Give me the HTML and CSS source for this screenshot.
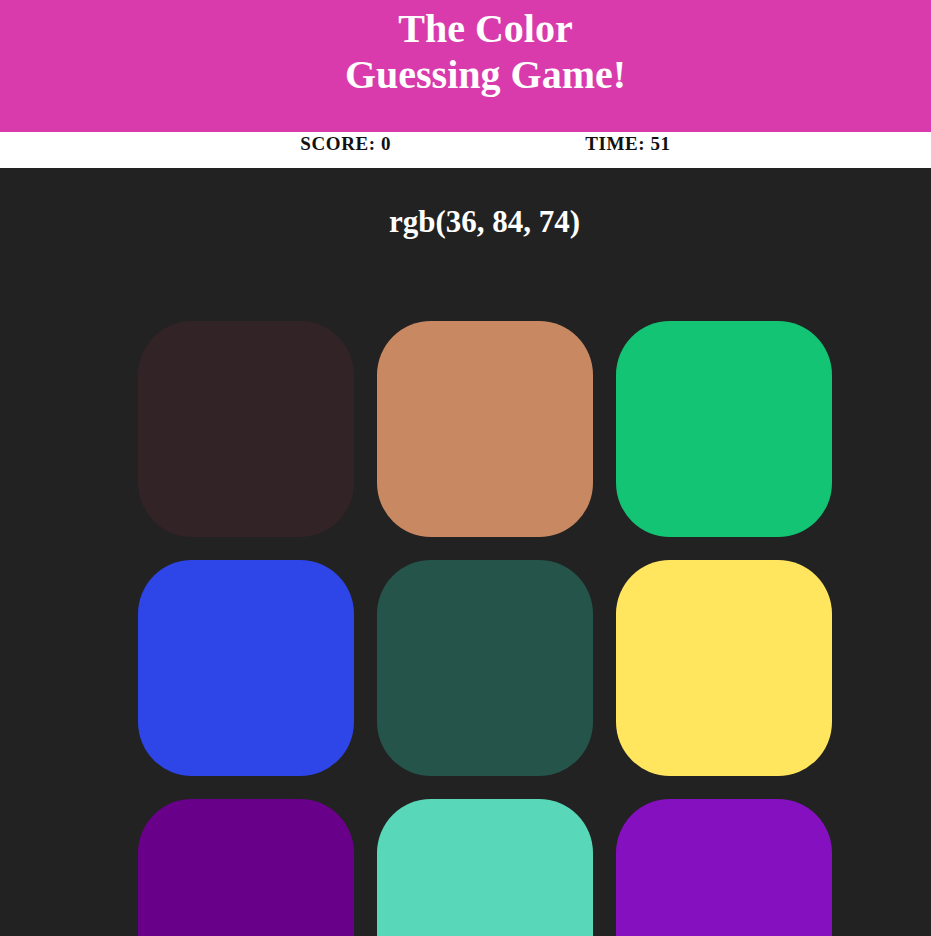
FILE: index.html
```html
<!DOCTYPE html>
<html>
<head>
<meta charset="utf-8">
<link rel="stylesheet" href="styles.css">
</head>
<body>
<header class="banner">
  <h1 class="title">The Color<br>Guessing Game!</h1>
</header>
<div class="stats">
  <span class="stat">SCORE: 0</span>
  <span class="stat">TIME: 51</span>
</div>
<main class="board">
  <h2 class="target">rgb(36, 84, 74)</h2>
  <div class="grid">
    <div class="tile" style="background: rgb(50, 35, 39)"></div>
    <div class="tile" style="background: rgb(200, 137, 98)"></div>
    <div class="tile" style="background: rgb(18, 196, 115)"></div>
    <div class="tile" style="background: rgb(46, 69, 232)"></div>
    <div class="tile" style="background: rgb(36, 84, 74)"></div>
    <div class="tile" style="background: rgb(255, 230, 94)"></div>
    <div class="tile" style="background: rgb(104, 0, 138)"></div>
    <div class="tile" style="background: rgb(88, 216, 184)"></div>
    <div class="tile" style="background: rgb(133, 16, 192)"></div>
  </div>
</main>
</body>
</html>
```
FILE: styles.css
```css
html, body {
  margin: 0;
  padding: 0;
  background: #222222;
  overflow: hidden;
  font-family: "Liberation Serif", "DejaVu Serif", serif;
}
.banner {
  background: #d93bac;
  height: 132px;
  padding-left: 40px;
  display: flex;
  justify-content: center;
  align-items: flex-start;
}
.title {
  margin: 6px 0 0;
  color: #ffffff;
  font-size: 40px;
  line-height: 46px;
  font-weight: bold;
  text-align: center;
}
.stats {
  background: #ffffff;
  height: 36px;
  padding-left: 40px;
  display: flex;
  justify-content: center;
  align-items: flex-start;
  gap: 194px;
}
.stat {
  margin-top: 1px;
  font-size: 19px;
  line-height: 22px;
  font-weight: bold;
  color: #111111;
  letter-spacing: 0.6px;
}
.board {
  padding-left: 38px;
  display: flex;
  flex-direction: column;
  align-items: center;
}
.target {
  margin: 36px 0 0;
  height: 36px;
  color: #ffffff;
  font-size: 31px;
  line-height: 36px;
  font-weight: bold;
}
.grid {
  margin-top: 81px;
  display: grid;
  grid-template-columns: repeat(3, 216px);
  grid-auto-rows: 216px;
  gap: 23px;
}
.tile {
  border-radius: 25%;
}
```
